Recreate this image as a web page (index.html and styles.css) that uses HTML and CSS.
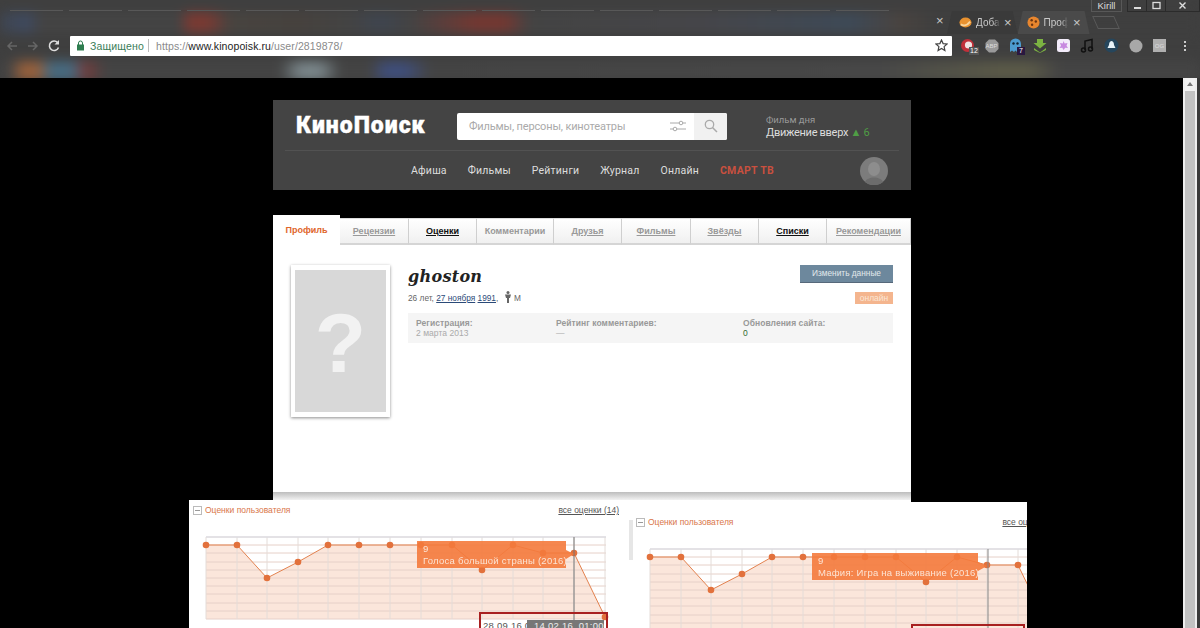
FILE: index.html
```html
<!DOCTYPE html>
<html lang="ru">
<head>
    <meta charset="UTF-8">
    <meta name="viewport" content="width=device-width, initial-scale=1.0">
    <title>ghoston - КиноПоиск</title>
    <link rel="stylesheet" href="styles.css">
</head>
<body>
    <header class="chrome">
        <div class="blur-strip blur-tabs"></div>
        <div class="blur-strip blur-marks"></div>

        <div class="tab-row">
            <div class="ghost-tabs">
                <span></span><span></span><span></span><span></span><span></span><span></span><span></span><span></span>
                <span></span><span></span><span></span><span></span><span></span><span></span><span></span>
            </div>
            <span class="tab-close first-close">×</span>
            <div class="browser-tab">
                <svg class="favicon" viewBox="0 0 14 14"><ellipse cx="7" cy="7" rx="6.5" ry="5.5" fill="#e8912f"/><path d="M2 9c3 2 7 1 10-3" stroke="#f7d39a" stroke-width="2" fill="none"/></svg>
                <span class="tab-title">Доба</span>
                <span class="tab-close">×</span>
            </div>
            <div class="browser-tab active">
                <svg class="favicon" viewBox="0 0 14 14"><circle cx="7" cy="7" r="6.5" fill="#e8862e"/><circle cx="5" cy="4.5" r="1.3" fill="#6b3512"/><circle cx="9.5" cy="6" r="1.3" fill="#6b3512"/><circle cx="5.5" cy="9.5" r="1.3" fill="#6b3512"/></svg>
                <span class="tab-title">Проф</span>
                <span class="tab-close">×</span>
            </div>
            <div class="new-tab"></div>
            <div class="window-btns">
                <span class="user-name">Kirill</span>
                <div class="controls">
                    <span class="ctl">
                        <svg width="9" height="9" viewBox="0 0 9 9"><rect x="1" y="6" width="7" height="2" fill="#ddd"/></svg>
                    </span>
                    <span class="ctl">
                        <svg width="9" height="9" viewBox="0 0 9 9"><rect x="1" y="1.5" width="7" height="6" fill="none" stroke="#ddd" stroke-width="1.3"/></svg>
                    </span>
                    <span class="ctl wide">
                        <svg width="9" height="9" viewBox="0 0 9 9"><path d="M1.5 1.5l6 6M7.5 1.5l-6 6" stroke="#ddd" stroke-width="1.4"/></svg>
                    </span>
                </div>
            </div>
        </div>

        <div class="addr-row">
            <div class="nav-btns">
                <svg width="14" height="14" viewBox="0 0 14 14"><path d="M12 7H3M7 3L3 7l4 4" stroke="#666" stroke-width="1.5" fill="none"/></svg>
                <svg width="14" height="14" viewBox="0 0 14 14"><path d="M2 7h9M7 3l4 4-4 4" stroke="#666" stroke-width="1.5" fill="none"/></svg>
                <svg width="14" height="14" viewBox="0 0 14 14"><path d="M11.5 8.5A4.7 4.7 0 1 1 10.6 3.6" stroke="#ddd" stroke-width="1.6" fill="none"/><path d="M12 1v4.5H7.5z" fill="#ddd"/></svg>
            </div>
            <div class="omnibox">
                <svg class="lock" width="9" height="11" viewBox="0 0 9 11"><rect x="1" y="4.5" width="7" height="6" fill="#2e7d4f"/><path d="M2.5 5V3a2 2 0 0 1 4 0v2" stroke="#2e7d4f" fill="none"/></svg>
                <span class="secure">Защищено</span>
                <span class="addr-sep"></span>
                <span class="url">https://<b>www.kinopoisk.ru</b>/user/2819878/</span>
                <svg class="star" width="13" height="13" viewBox="0 0 13 13"><path d="M6.5 1l1.600 3.600 3.900.4-2.900 2.600.8 3.900-3.400-2-3.400 2 .8-3.900L1 5l3.900-.4z" fill="none" stroke="#444" stroke-width="1.200"/></svg>
            </div>
            <div class="ext-icons">
                <span class="ext">
                    <svg width="15" height="15" viewBox="0 0 15 15"><circle cx="7.500" cy="7.500" r="6.500" fill="#c0303a"/><circle cx="8.500" cy="7" r="3.600" fill="#f1e4e4"/></svg>
                    <i class="ext-badge gray">12</i>
                </span>
                <span class="ext">
                    <svg width="14" height="14" viewBox="0 0 14 14"><path d="M4 0.500h6L13.500 4v6L10 13.500H4L.5 10V4z" fill="#9a9a9a"/></svg>
                    <em class="abp">ABP</em>
                </span>
                <span class="ext">
                    <svg width="13" height="16" viewBox="0 0 13 16"><path d="M1 14V6a5.500 5.500 0 0 1 11 0v8l-2-1.500-2 1.500-1.500-1.500L5 14l-2-1.500z" fill="#4d9bd0"/><circle cx="4.500" cy="5.500" r="1.200" fill="#123"/><circle cx="8.500" cy="5.500" r="1.200" fill="#123"/></svg>
                    <i class="ext-badge purple">7</i>
                </span>
                <span class="ext">
                    <svg width="14" height="14" viewBox="0 0 14 14"><path d="M4 0h6v4h3.500L7 9.500.5 4H4zM1 9l6 4.500L13 9v2l-6 3-6-3z" fill="#7cb342"/></svg>
                </span>
                <span class="ext">
                    <svg width="15" height="15" viewBox="0 0 15 15"><rect x="1" y="1" width="13" height="13" rx="2.500" fill="#f3ecfa"/><path d="M7.500 3l1.200 2.500 2.800-.5-1 2.700 1.500 2.300-2.800-.2L7.500 12l-1.200-2.200-2.800.2L5 7.700l-1-2.700 2.800.5z" fill="#c88ae0"/></svg>
                </span>
                <span class="ext">
                    <svg width="15" height="15" viewBox="0 0 15 15"><path d="M5 12V3l7-1.500V11" fill="none" stroke="#111" stroke-width="1.500"/><circle cx="3.500" cy="12" r="2" fill="none" stroke="#111" stroke-width="1.500"/><circle cx="10.500" cy="11" r="2" fill="none" stroke="#111" stroke-width="1.500"/></svg>
                </span>
                <span class="ext">
                    <svg width="15" height="15" viewBox="0 0 15 15"><circle cx="7.500" cy="7.500" r="7" fill="#26465c"/><path d="M7.500 3c2 0 2.500 2.500 2.500 4l1.500 3h-8L5 7c0-1.500.5-4 2.500-4z" fill="#e9f3f8"/></svg>
                </span>
                <span class="ext">
                    <svg width="14" height="14" viewBox="0 0 14 14"><circle cx="7" cy="7" r="6.500" fill="#a8a8a8"/></svg>
                </span>
                <span class="ext">
                    <svg width="13" height="13" viewBox="0 0 13 13"><rect width="13" height="13" fill="#b0b0b0"/></svg>
                    <em class="cog">OG</em>
                </span>
            </div>
            <div class="menu-dots"><span></span><span></span><span></span></div>
        </div>
    </header>

    <main class="viewport">
        <div class="page">
            <div class="site-head">
                <div class="head-top">
                    <div class="logo">КиноПоиск</div>
                    <div class="search">
                        <span class="search-text">Фильмы, персоны, кинотеатры</span>
                        <svg class="filter-icon" width="16" height="12" viewBox="0 0 16 12"><path d="M0 3h16M0 9h16" stroke="#aaa"/><circle cx="11" cy="3" r="1.800" fill="#fff" stroke="#aaa"/><circle cx="5" cy="9" r="1.800" fill="#fff" stroke="#aaa"/></svg>
                        <span class="search-btn">
                            <svg width="14" height="14" viewBox="0 0 14 14"><circle cx="5.500" cy="5.500" r="4.200" fill="none" stroke="#aaa" stroke-width="1.300"/><path d="M8.500 8.500l4.500 4.500" stroke="#aaa" stroke-width="1.500"/></svg>
                        </span>
                    </div>
                    <div class="film-day">
                        <span class="film-label">Фильм дня</span>
                        <span class="film-name">Движение вверх <i class="rate">▲ 6</i></span>
                    </div>
                </div>
                <nav class="head-nav">
                    <a>Афиша</a>
                    <a>Фильмы</a>
                    <a>Рейтинги</a>
                    <a>Журнал</a>
                    <a>Онлайн</a>
                    <a class="smart">СМАРТ ТВ</a>
                    <svg class="user-pic" width="28" height="28" viewBox="0 0 28 28"><circle cx="14" cy="14" r="14" fill="#7c7c7c"/><ellipse cx="14" cy="12" rx="6" ry="7" fill="#8d8d8d"/><path d="M5 25c2-6 16-6 18 0a14 14 0 0 1-18 0z" fill="#6c6c6c"/></svg>
                </nav>
            </div>

            <div class="tabs">
                <a class="tab current">Профиль</a>
                <a class="tab">Рецензии</a>
                <a class="tab dark">Оценки</a>
                <a class="tab plain">Комментарии</a>
                <a class="tab">Друзья</a>
                <a class="tab">Фильмы</a>
                <a class="tab">Звёзды</a>
                <a class="tab dark">Списки</a>
                <a class="tab">Рекомендации</a>
            </div>

            <section class="profile">
                <div class="photo"><div class="photo-inner">?</div></div>
                <div class="info">
                    <div class="info-top">
                        <div>
                            <h1>ghoston</h1>
                            <p class="birth">
                                26 лет, <a>27 ноября</a> <a>1991</a>,
                                <svg class="gender" width="8" height="12" viewBox="0 0 8 12"><circle cx="4" cy="1.500" r="1.500" fill="#666"/><path d="M1 3.500h6L6 7H5v5H3V7H2z" fill="#666"/></svg>
                                М
                            </p>
                        </div>
                        <div class="info-actions">
                            <a class="edit-btn">Изменить данные</a>
                            <span class="online">онлайн</span>
                        </div>
                    </div>
                    <div class="stats">
                        <div class="stat reg"><b>Регистрация:</b><span>2 марта 2013</span></div>
                        <div class="stat comm"><b>Рейтинг комментариев:</b><span>—</span></div>
                        <div class="stat upd"><b>Обновления сайта:</b><span class="zero">0</span></div>
                    </div>
                </div>
            </section>
            <div class="page-fade"></div>
            <div class="page-rest"><span class="rest-strip"></span></div>
        </div>
        <div class="scrollbar">
            <span class="scroll-up"></span>
        </div>
    </main>

    <!-- two pasted screenshots lying over the page -->
    <div class="shot shot-left">
        <div class="shot-head">
            <span class="minus"></span>
            <span class="shot-title">Оценки пользователя</span>
            <a class="all-rates">все оценки (14)</a>
        </div>
        <svg class="chart" width="440" height="98" viewBox="189 530 440 98">
            <defs>
                <g id="rate-chart">
                    <path d="M206 545H237L267 578L298 562L328 545H513L543 553H574L605 617V619H206Z" fill="#fbe6db"/>
                    <path d="M206 537H606M206 545H606M206 553H606M206 562H606M206 570H606M206 578H606M206 586H606M206 594H606M206 603H606M206 611H606M206 619H606" stroke="#e6d0c8"/>
                    <path d="M206 537V619M237 537V619M267 537V619M298 537V619M328 537V619M359 537V619M390 537V619M421 537V619M452 537V619M482 537V619M513 537V619M543 537V619M574 537V619M605 537V619" stroke="#e4dcd8"/>
                    <path d="M206 537H606" stroke="#d5dde8"/>
                    <polyline points="206,545 237,545 267,578 298,562 328,545 359,545 390,545 421,545 452,545 482,570 513,545 543,553 574,553 605,617" fill="none" stroke="#e3824f"/>
                    <g fill="#e2713c">
                        <circle cx="206" cy="545" r="3.300"/><circle cx="237" cy="545" r="3.300"/><circle cx="267" cy="578" r="3.300"/>
                        <circle cx="298" cy="562" r="3.300"/><circle cx="328" cy="545" r="3.300"/><circle cx="359" cy="545" r="3.300"/>
                        <circle cx="390" cy="545" r="3.300"/><circle cx="421" cy="545" r="3.300"/><circle cx="452" cy="545" r="3.300"/>
                        <circle cx="482" cy="570" r="3.300"/><circle cx="513" cy="545" r="3.300"/><circle cx="543" cy="553" r="3.300"/>
                        <circle cx="574" cy="553" r="3.300"/><circle cx="605" cy="617" r="3.300"/>
                    </g>
                </g>
            </defs>
            <use href="#rate-chart"/>
            <path d="M574 537V628" stroke="#777"/>
        </svg>
        <div class="tip tip-left">
            <span>9</span>
            <span>Голоса большой страны (2016)</span>
        </div>
        <div class="range range-left">
            <span class="range-from">28.09.16 0</span>
            <span class="range-to">14.02.16, 01:00</span>
        </div>
    </div>

    <div class="shot shot-right">
        <div class="shot-head">
            <span class="minus"></span>
            <span class="shot-title">Оценки пользователя</span>
            <a class="all-rates">все оценки (14)</a>
        </div>
        <svg class="chart" width="440" height="98" viewBox="189 530 440 98">
            <use href="#rate-chart"/>
            <path d="M544 537V628" stroke="#888"/>
        </svg>
        <div class="tip tip-right">
            <span>9</span>
            <span>Мафия: Игра на выживание (2016)</span>
        </div>
        <div class="range range-right"></div>
    </div>
</body>
</html>
```

FILE: styles.css
```css
* {
    margin: 0;
    padding: 0;
    box-sizing: border-box;
}

body {
    width: 1200px;
    height: 628px;
    overflow: hidden;
    position: relative;
    background: #000;
    font-family: 'Liberation Sans', Arial, sans-serif;
}

/* browser chrome */
.chrome {
    position: relative;
    height: 78px;
    background: #3f3f3f;
    overflow: hidden;
}

.blur-strip {
    position: absolute;
    left: 0;
    right: 0;
    filter: blur(6px);
}

.blur-tabs {
    top: 12px;
    height: 21px;
    background: linear-gradient(90deg,
        #3f4550 0, #3f4a60 28px, #444 40px, #444 180px,
        #7a3a33 188px, #7a3a33 208px, #484440 230px, #47423e 300px,
        #444 350px, #3f4550 380px, #444 410px,
        #743832 475px, #743832 505px, #444 530px, #46464a 700px,
        #3e4a58 850px, #4a4440 900px, #3f3f3f 935px);
}

.blur-marks {
    top: 61px;
    height: 20px;
    background: linear-gradient(90deg,
        #444 10px, #96603c 22px, #96603c 38px, #486a80 50px, #486a80 72px,
        #743c3c 85px, #444 105px, #444 280px,
        #7a868a 300px, #7a868a 320px, #444 340px, #444 370px,
        #3f4e7a 385px, #3f4e7a 405px, #444 430px, #484848 880px,
        #5b5a48 1000px, #5b5a48 1030px, #444 1060px);
}

.tab-row {
    position: relative;
    height: 34px;
    display: flex;
    align-items: flex-end;
    padding-left: 10px;
}

.ghost-tabs {
    display: flex;
    gap: 6px;
    flex: 0 0 922px;
    align-self: flex-start;
    margin-top: 10px;
    overflow: hidden;
}

.ghost-tabs span {
    flex: 0 0 53px;
    height: 1px;
    background: #585858;
}

.tab-close {
    color: #c8c8c8;
    font-size: 13px;
    line-height: 14px;
    margin-left: auto;
}

.first-close {
    flex: 0 0 11px;
    margin: 0 0 6px 4px;
}

.browser-tab {
    flex: 0 0 70px;
    height: 23px;
    display: flex;
    align-items: center;
    gap: 4px;
    padding: 0 6px 0 12px;
    font-size: 10px;
    color: #c9c9c9;
    background: #3a3a3a;
    clip-path: polygon(7% 0, 93% 0, 100% 100%, 0 100%);
}

.browser-tab.active {
    background: #4a4a4a;
    flex-basis: 72px;
    padding: 0 9px;
}

.favicon {
    width: 13px;
    height: 13px;
    flex: none;
}

.tab-title {
    width: 24px;
    overflow: hidden;
    white-space: nowrap;
    -webkit-mask-image: linear-gradient(90deg, #000 72%, transparent);
    mask-image: linear-gradient(90deg, #000 72%, transparent);
}

.new-tab {
    flex: 0 0 22px;
    height: 13px;
    margin: 0 0 5px 5px;
    border: 1px solid #5a5a5a;
    transform: skewX(24deg);
}

.window-btns {
    position: absolute;
    top: 0;
    right: 0;
    display: flex;
    gap: 5px;
}

.user-name {
    width: 31px;
    height: 12px;
    border: 1px solid #585858;
    border-top: none;
    font-size: 9.5px;
    line-height: 11px;
    text-align: center;
    color: #ddd;
}

.controls {
    display: flex;
    width: 73px;
    height: 12px;
    border: 1px solid #2b2b2b;
    border-top: none;
}

.ctl {
    width: 19px;
    display: flex;
    align-items: center;
    justify-content: center;
    border-right: 1px solid #2b2b2b;
}

.ctl.wide {
    flex: 1;
    border-right: none;
}

.addr-row {
    position: relative;
    display: flex;
    align-items: center;
    height: 21px;
    margin-top: 1px;
    padding-left: 5px;
}

.nav-btns {
    display: flex;
    gap: 7px;
    flex: 0 0 65px;
}

.omnibox {
    flex: 0 0 882px;
    height: 20px;
    background: #fff;
    border-radius: 1px;
    display: flex;
    align-items: center;
    padding: 0 4px 0 6px;
    font-size: 10.5px;
}

.secure {
    color: #3a7d57;
    margin-left: 5px;
    width: 52px;
    letter-spacing: 0.15px;
}

.addr-sep {
    width: 1px;
    height: 13px;
    background: #bbb;
    margin: 0 7px 0 6px;
}

.url {
    color: #8a8a8a;
    letter-spacing: 0.1px;
}

.url b {
    color: #222;
    font-weight: normal;
}

.star {
    margin-left: auto;
}

.ext-icons {
    display: flex;
    align-items: center;
    margin-left: 8px;
    gap: 9px;
}

.ext {
    position: relative;
    width: 15px;
    height: 16px;
    display: flex;
    align-items: center;
    justify-content: center;
}

.ext-badge {
    position: absolute;
    left: 9px;
    top: 9px;
    font-style: normal;
    font-size: 7px;
    line-height: 8px;
    padding: 0 1px;
    color: #fff;
}

.ext-badge.gray {
    background: #555;
}

.ext-badge.purple {
    background: #2a1840;
    padding: 0 2px;
}

.abp,
.cog {
    position: absolute;
    inset: 0;
    font-style: normal;
    font-size: 6px;
    line-height: 16px;
    text-align: center;
    color: #ddd;
}

.menu-dots {
    display: flex;
    flex-direction: column;
    gap: 2px;
    margin-left: 17px;
}

.menu-dots span {
    width: 2px;
    height: 2px;
    background: #ccc;
}

/* page */
.viewport {
    height: 550px;
    display: flex;
}

.page {
    width: 638px;
    margin: 22px 272px 0 273px;
}

.site-head {
    height: 90px;
    background: #444;
    font-family: Roboto, sans-serif;
}

.head-top {
    height: 51px;
    display: flex;
    align-items: center;
    margin: 0 12px;
    border-bottom: 1px solid #525252;
}

.logo {
    flex: 0 0 172px;
    padding-left: 11px;
    color: #fff;
    font-size: 23px;
    font-weight: 900;
    letter-spacing: 1px;
    -webkit-text-stroke: 0.4px #fff;
}

.search {
    flex: 0 0 270px;
    height: 27px;
    background: #fff;
    border-radius: 2px;
    display: flex;
    align-items: center;
    padding-left: 12px;
    margin-top: 2px;
    font-size: 11px;
}

.search-text {
    color: #aaa;
    letter-spacing: -0.15px;
}

.filter-icon {
    margin-left: auto;
    margin-right: 8px;
}

.search-btn {
    width: 33px;
    height: 27px;
    background: #f1f1f1;
    border-radius: 0 2px 2px 0;
    display: flex;
    align-items: center;
    justify-content: center;
}

.film-day {
    display: flex;
    flex-direction: column;
    gap: 1px;
    margin-left: 39px;
    margin-top: 3px;
}

.film-label {
    color: #999;
    font-size: 9.5px;
}

.film-name {
    color: #ddd;
    font-size: 11px;
    letter-spacing: -0.3px;
}

.rate {
    color: #4f9e45;
    font-style: normal;
}

.head-nav {
    height: 39px;
    display: flex;
    align-items: center;
    gap: 21px;
    padding-left: 138px;
    font-size: 10.5px;
    letter-spacing: 0.2px;
    color: #ddd;
}

.head-nav .smart {
    color: #c9503f;
    font-weight: 700;
    font-size: 10.5px;
    letter-spacing: 0.3px;
}

.user-pic {
    margin-left: auto;
    margin-right: 23px;
}

.tabs {
    display: grid;
    grid-template-columns: 67px 69px 68px 77px 68px 69px 68px 68px 84px;
    align-items: end;
    margin-top: 25px;
    height: 30px;
    font-size: 9px;
    font-weight: bold;
    text-align: center;
}

.tab {
    height: 27px;
    line-height: 25px;
    color: #999;
    text-decoration: underline;
    background: linear-gradient(#fff, #f0f0f0);
    border-right: 1px solid #cfcfcf;
    border-top: 1px solid #ddd;
    border-bottom: 2px solid #d5d5d5;
}

.tab.dark {
    color: #111;
}

.tab.plain {
    text-decoration: none;
}

.tab.current {
    height: 30px;
    line-height: 30px;
    color: #e0662c;
    background: #fff;
    text-decoration: none;
    border: none;
}

.profile {
    height: 247px;
    background: #fff;
    display: flex;
    padding: 20px 18px 0 18px;
}

.photo {
    flex: 0 0 99px;
    height: 152px;
    padding: 5px 4px;
    background: #fff;
    box-shadow: 0 1px 3px rgba(0, 0, 0, 0.45);
}

.photo-inner {
    height: 142px;
    background: #d8d8d8;
    color: #f2f2f2;
    font-size: 84px;
    font-weight: bold;
    line-height: 146px;
    text-align: center;
}

.info {
    flex: 1;
    margin-left: 18px;
}

.info-top {
    display: flex;
    justify-content: space-between;
    height: 48px;
}

h1 {
    font-family: 'DejaVu Serif', serif;
    font-style: italic;
    font-size: 16px;
    font-weight: bold;
    letter-spacing: 0.3px;
    line-height: 24px;
    color: #222;
}

.birth {
    margin-top: 2px;
    font-size: 8.3px;
    line-height: 14px;
    color: #666;
}

.birth a {
    color: #2b4a78;
    text-decoration: underline;
}

.gender {
    vertical-align: -2px;
    margin-left: 3px;
}

.info-actions {
    display: flex;
    flex-direction: column;
    align-items: flex-end;
    gap: 9px;
}

.edit-btn {
    width: 93px;
    height: 18px;
    background: #6d889d;
    border-bottom: 1px solid #56687a;
    color: #e2e8ec;
    font-size: 8.3px;
    line-height: 17px;
    text-align: center;
}

.online {
    width: 38px;
    height: 12px;
    background: #f4b58e;
    color: #fbe6d6;
    font-size: 8.5px;
    line-height: 12px;
    text-align: center;
}

.stats {
    display: flex;
    height: 30px;
    background: #f5f5f5;
    padding: 5px 8px;
    font-size: 8.5px;
    line-height: 10px;
    letter-spacing: 0.05px;
    color: #aaa;
}

.stat {
    display: flex;
    flex-direction: column;
}

.stat b {
    color: #999;
}

.reg {
    flex: 0 0 140px;
}

.comm {
    flex: 0 0 187px;
}

.zero {
    color: #2f6a2f;
}

.page-fade {
    height: 8px;
    background: linear-gradient(#bdbdbd, #f2f2f2);
}

.page-rest {
    height: 128px;
    background: #fff;
    padding: 20px 0 0 356px;
}

.rest-strip {
    display: block;
    width: 4px;
    height: 40px;
    background: #e6e6e6;
}

.scrollbar {
    flex: 0 0 14px;
    border-left: 2px solid #eee;
    border-right: 2px solid #eee;
    background: #c2c2c2;
    box-shadow: 3px 0 0 #3a3a3a;
}

.scroll-up {
    display: block;
    height: 13px;
    background: #f1f1f1;
    position: relative;
}

.scroll-up::after {
    content: "";
    position: absolute;
    left: 2px;
    top: 4px;
    border: 3px solid transparent;
    border-bottom: 4px solid #777;
    border-top: none;
}

/* pasted screenshots */
.shot {
    position: absolute;
    background: #fff;
    overflow: hidden;
}

.shot-left {
    left: 189px;
    top: 500px;
    width: 440px;
    height: 128px;
}

.shot-right {
    left: 633px;
    top: 502px;
    width: 394px;
    height: 126px;
}

.shot-head {
    height: 30px;
    display: flex;
    align-items: center;
    padding: 0 10px 10px 4px;
    font-size: 8.5px;
}

.shot-right .shot-head {
    width: 440px;
    height: 40px;
    padding: 0 10px 0 3px;
}

.minus {
    width: 9px;
    height: 9px;
    border: 1px solid #bbb;
    margin-right: 3px;
    position: relative;
}

.minus::after {
    content: "";
    position: absolute;
    left: 1px;
    right: 1px;
    top: 3px;
    height: 1px;
    background: #999;
}

.shot-title {
    color: #d9764a;
}

.all-rates {
    margin-left: auto;
    color: #555;
    text-decoration: underline;
}

.chart {
    display: block;
}

.tip {
    position: absolute;
    height: 27px;
    display: flex;
    flex-direction: column;
    justify-content: center;
    padding-left: 6px;
    background: #f47a3c;
    opacity: 0.9;
    color: #fde4d4;
    font-size: 9.5px;
    line-height: 12px;
    letter-spacing: 0.25px;
    white-space: nowrap;
}

.tip-left {
    left: 228px;
    top: 41px;
    width: 157px;
    clip-path: polygon(0 0, 149px 0, 149px 9px, 157px 13px, 149px 18px, 149px 100%, 0 100%);
}

.tip-right {
    left: 179px;
    top: 51px;
    width: 175px;
    clip-path: polygon(0 0, 166px 0, 166px 9px, 175px 13px, 166px 18px, 166px 100%, 0 100%);
}

.range {
    position: absolute;
    border: 2px solid #a82020;
    border-bottom: none;
    display: flex;
    font-size: 9.5px;
    letter-spacing: 0.25px;
}

.range-left {
    left: 290px;
    top: 112px;
    width: 129px;
    height: 16px;
    padding-top: 6px;
}

.range-right {
    left: 278px;
    top: 122px;
    width: 114px;
    height: 4px;
}

.range-from {
    flex: 0 0 46px;
    overflow: hidden;
    white-space: nowrap;
    color: #555;
    padding-left: 2px;
}

.range-to {
    flex: 1;
    background: #777;
    color: #eee;
    padding-left: 7px;
    margin-right: 2px;
    white-space: nowrap;
}
```
